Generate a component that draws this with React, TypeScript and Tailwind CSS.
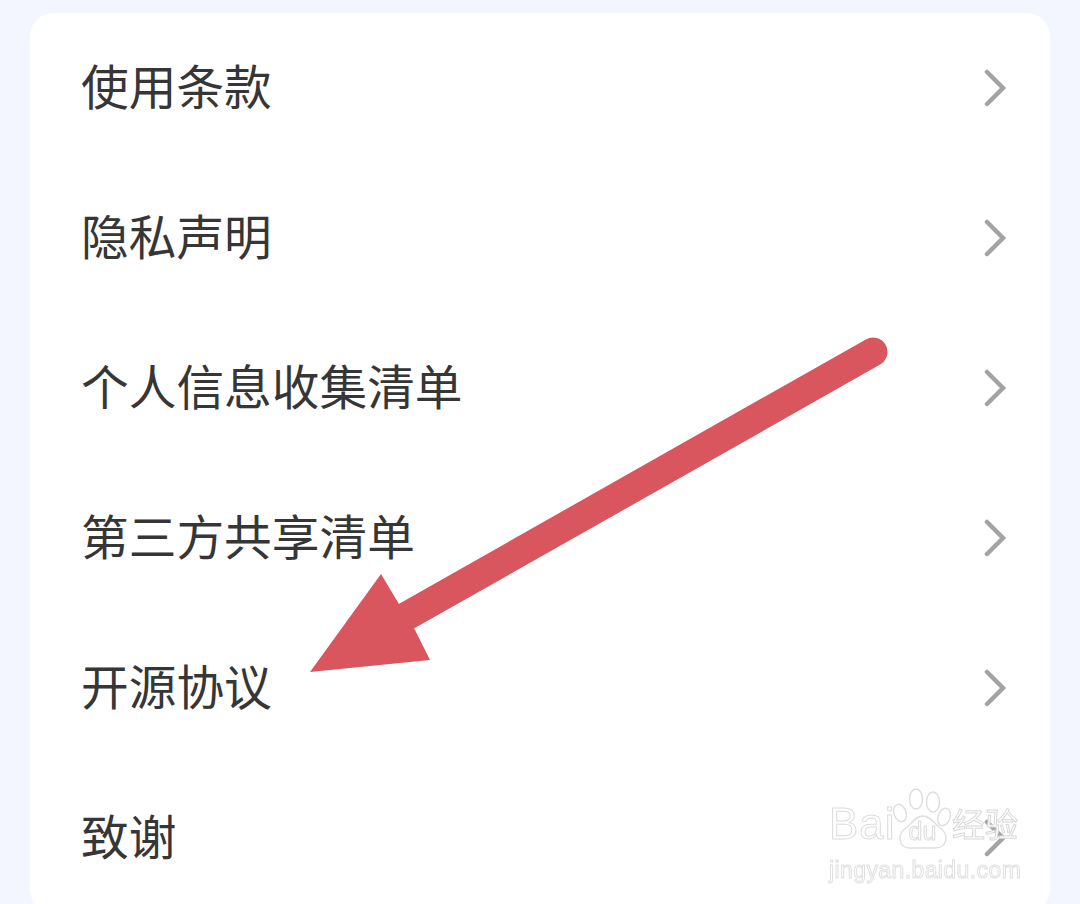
const rows = ["使用条款", "隐私声明", "个人信息收集清单", "第三方共享清单", "开源协议", "致谢"];

function Chevron() {
  return (
    <svg width="24" height="38" viewBox="0 0 24 38" fill="none" className="shrink-0">
      <path d="M4 3 L20 19 L4 35" stroke="#a3a3a3" strokeWidth="4.5" strokeLinecap="round" strokeLinejoin="miter" />
    </svg>
  );
}

function Watermark() {
  return (
    <div className="absolute left-[829px] top-[788px] flex flex-col blur-[0.4px]">
      <div className="flex h-[64px] items-end">
        <span className="w-[64px] pb-[6px] font-['Liberation_Sans',sans-serif] text-[44px] leading-[44px] tracking-[1px] text-transparent [-webkit-text-stroke:1px_#dcdcdc]">Bai</span>
        <div className="grid h-[64px] w-[59px] place-items-center">
          <svg className="[grid-area:1/1]" width="59" height="64" viewBox="0 0 59 64" fill="none" stroke="#dedede" strokeWidth="1.4">
            <ellipse cx="7" cy="25" rx="6" ry="9" transform="rotate(-20 7 25)" fill="white" />
            <ellipse cx="23" cy="11" rx="6.5" ry="10" fill="white" />
            <ellipse cx="40" cy="14" rx="6.5" ry="10" fill="white" />
            <ellipse cx="51" cy="29" rx="6" ry="9" transform="rotate(20 51 29)" fill="white" />
            <path d="M30 28 C38 28 41 36 47 40 C56 46 55 60 42 60 L17 60 C5 60 4 46 13 40 C19 36 22 28 30 28 Z" fill="white" />
          </svg>
          <span className="mt-[22px] font-['Liberation_Sans',sans-serif] text-[25px] leading-none text-transparent [grid-area:1/1] [-webkit-text-stroke:1px_#dcdcdc]">du</span>
        </div>
        <span className="pb-[12px] text-[33px] leading-[33px] text-white [-webkit-text-stroke:1px_#d8d8d8]">经验</span>
      </div>
      <span className="mt-[5px] font-['Liberation_Sans',sans-serif] text-[23px] leading-[26px] tracking-[0.4px] text-transparent [-webkit-text-stroke:1px_#e0e0e0]">jingyan.baidu.com</span>
    </div>
  );
}

export default function App() {
  return (
    <div className="relative h-[904px] w-[1080px] overflow-hidden bg-[#f3f6fe] px-[30px] pt-[13px] font-['Noto_Sans_CJK_SC','Noto_Sans',sans-serif]">
      <div className="rounded-[24px] bg-white">
        {rows.map((t) => (
          <div key={t} className="flex h-[150px] items-center justify-between pl-[51px] pr-[43px]">
            <span className="mb-[7px] text-[47.7px] leading-none text-[#363636]">{t}</span>
            <Chevron />
          </div>
        ))}
      </div>

      <svg className="absolute left-0 top-0" width="1080" height="904" viewBox="0 0 1080 904" fill="none">
        <line x1="873" y1="352" x2="405" y2="617" stroke="#d9565e" strokeWidth="29" strokeLinecap="round" />
        <polygon points="310,672 381,574 399,604 415,630 430,660" fill="#d9565e" />
      </svg>

      <Watermark />
    </div>
  );
}
